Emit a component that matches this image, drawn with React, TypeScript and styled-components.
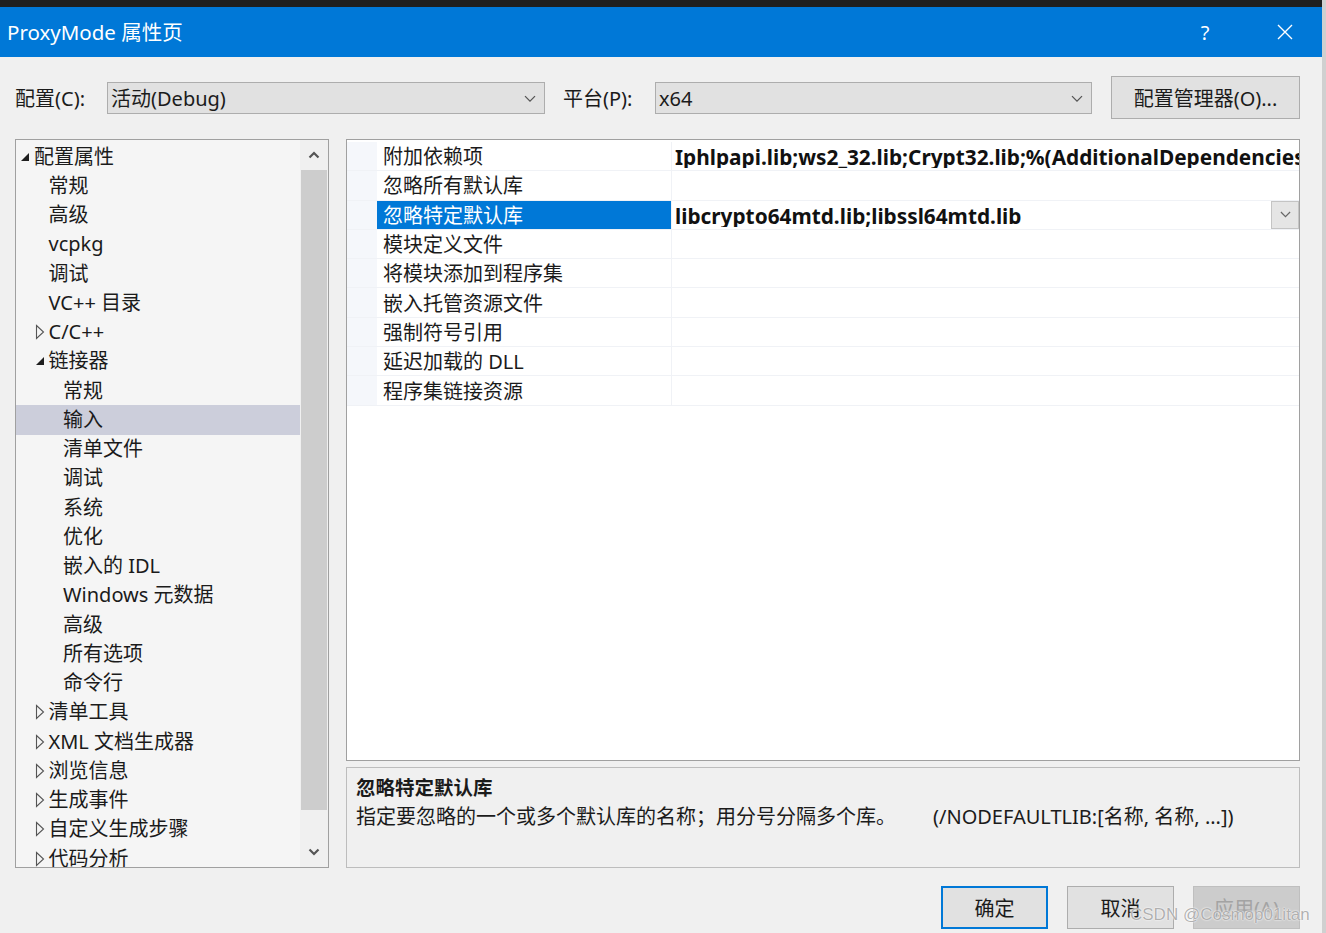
import React from "react";
import styled, { createGlobalStyle } from "styled-components";

const FONT = `"Noto Sans", "Noto Sans CJK SC", sans-serif`;

const Global = createGlobalStyle`
  html, body { margin: 0; padding: 0; background: #f0f0f0; }
  body { font-family: ${FONT}; color: #1b1b1b; }
  * { box-sizing: border-box; }
`;

const Window = styled.div`
  width: 1326px;
  height: 933px;
  display: flex;
  flex-direction: column;
  background: #f0f0f0;
  position: relative;
  overflow: hidden;
  border-right: 4px solid #d0d0d0;
`;

const TopStrip = styled.div`
  height: 7px;
  background: #1f1f1f;
  flex: none;
`;

const TitleBar = styled.div`
  height: 50px;
  flex: none;
  background: #0078d7;
  display: flex;
  align-items: center;
  padding-left: 7px;
  padding-right: 14px;
  color: #fff;
`;

const Title = styled.div`
  font-size: 20.5px;
  flex: 1;
  line-height: 1;
`;

const TitleButton = styled.div<{ $mr?: number }>`
  width: 46px;
  height: 50px;
  margin-right: ${(p) => p.$mr ?? 0}px;
  display: flex;
  align-items: center;
  justify-content: center;
  font-size: 20px;
`;

const Content = styled.div`
  flex: 1;
  min-width: 0;
  display: flex;
  flex-direction: column;
  padding: 19px 22px 0 15px;
`;

const ConfigRow = styled.div`
  height: 43px;
  display: flex;
  align-items: center;
`;

const Label = styled.div<{ $w: number }>`
  width: ${(p) => p.$w}px;
  font-size: 20px;
  line-height: 1;
  flex: none;
  padding-top: 2px;
`;

const Combo = styled.div<{ $w: number; $mr: number }>`
  width: ${(p) => p.$w}px;
  margin-right: ${(p) => p.$mr}px;
  height: 32px;
  flex: none;
  background: #e1e1e1;
  border: 1px solid #adadad;
  display: flex;
  align-items: center;
  padding-left: 3px;
  padding-top: 2px;
  font-size: 20px;
  line-height: 1;
`;

const ComboText = styled.span`
  flex: 1;
`;

const ChevronBox = styled.span`
  width: 28px;
  display: flex;
  align-items: center;
  justify-content: center;
`;

const Button = styled.div<{ $primary?: boolean; $disabled?: boolean; $w?: number }>`
  width: ${(p) => p.$w ?? 107}px;
  height: 43px;
  flex: none;
  display: flex;
  align-items: center;
  justify-content: center;
  font-size: 20px;
  line-height: 1;
  padding-top: 2px;
  background: ${(p) => (p.$disabled ? "#cccccc" : "#e1e1e1")};
  color: ${(p) => (p.$disabled ? "#a3a3a3" : "#1b1b1b")};
  border: ${(p) => (p.$primary ? "2px solid #0078d7" : p.$disabled ? "1px solid #bfbfbf" : "1px solid #adadad")};
`;

const Main = styled.div`
  margin-top: 20px;
  height: 729px;
  display: flex;
  gap: 17px;
  min-width: 0;
`;

const TreePanel = styled.div`
  width: 314px;
  flex: none;
  border: 1px solid #a0a0a0;
  background: #f5f5f5;
  display: flex;
  overflow: hidden;
`;

const TreeList = styled.div`
  flex: 1;
  padding-top: 2px;
  overflow: hidden;
`;

const TreeRow = styled.div<{ $level: number; $selected?: boolean }>`
  height: 29.25px;
  display: flex;
  align-items: center;
  padding-left: ${(p) => 4 + p.$level * 14.5}px;
  background: ${(p) => (p.$selected ? "#cccedb" : "transparent")};
  font-size: 20px;
  line-height: 1;
  white-space: nowrap;
  color: #1b1b1b;
`;

const Toggle = styled.span`
  width: 14px;
  flex: none;
  display: flex;
  align-items: center;
`;

const ScrollBar = styled.div`
  width: 28px;
  flex: none;
  background: #f0f0f0;
  display: flex;
  flex-direction: column;
`;

const ScrollArrow = styled.div<{ $h: number }>`
  height: ${(p) => p.$h}px;
  flex: none;
  display: flex;
  align-items: center;
  justify-content: center;
`;

const ScrollThumb = styled.div`
  height: 640px;
  flex: none;
  background: #cdcdcd;
  margin: 0 1px;
`;

const ScrollTrack = styled.div`
  flex: 1;
`;

const RightCol = styled.div`
  flex: 1;
  min-width: 0;
  display: flex;
  flex-direction: column;
  gap: 6px;
`;

const Grid = styled.div`
  height: 622px;
  flex: none;
  background: #fff;
  border: 1px solid #a0a0a0;
  padding-top: 2px;
  overflow: hidden;
`;

const GridRow = styled.div`
  height: 29.3px;
  display: flex;
  border-bottom: 1px solid #f0f2f6;
`;

const Gutter = styled.div`
  width: 30px;
  flex: none;
  background: #f5f7fb;
`;

const NameCell = styled.div<{ $selected?: boolean }>`
  width: 295px;
  flex: none;
  display: flex;
  align-items: center;
  padding-left: 6px;
  padding-top: 2px;
  font-size: 20px;
  line-height: 1;
  white-space: nowrap;
  background: ${(p) => (p.$selected ? "#0078d7" : "transparent")};
  color: ${(p) => (p.$selected ? "#fff" : "#1b1b1b")};
  border-right: 1px solid #f0f2f6;
`;

const ValueCell = styled.div`
  flex: 1;
  min-width: 0;
  display: flex;
  align-items: center;
  padding-left: 3px;
  font-size: 20.8px;
  font-weight: 700;
  line-height: 1;
  white-space: nowrap;
  overflow: hidden;
  color: #111;
`;

const ValueText = styled.span`
  flex: 1;
  min-width: 0;
  overflow: hidden;
  padding-top: 3px;
`;

const DropButton = styled.div`
  width: 28px;
  height: 28px;
  flex: none;
  background: #e5e5e5;
  border: 1px solid #c4c4c4;
  display: flex;
  align-items: center;
  justify-content: center;
`;

const Desc = styled.div`
  flex: 1;
  background: #f0f0f0;
  border: 1px solid #bdbdbd;
  padding: 8px 9px;
  font-size: 20px;
  line-height: 34px;
  white-space: nowrap;
  overflow: hidden;
`;

const DescTitle = styled.div`
  font-weight: 700;
  line-height: 24px;
  font-size: 19.5px;
`;

const DescSwitch = styled.span`
  margin-left: 37px;
`;

const ButtonRow = styled.div`
  margin-top: 18px;
  display: flex;
  justify-content: flex-end;
  gap: 19px;
`;

const Watermark = styled.div`
  position: absolute;
  left: 1130px;
  top: 905px;
  font-family: "Liberation Sans", sans-serif;
  font-size: 17px;
  color: rgba(150, 150, 150, 0.75);
  text-shadow: 0 0 1px #fff, 0 0 2px #fff;
  white-space: nowrap;
  pointer-events: none;
`;

const Chevron = ({ color = "#555", size = 12 }: { color?: string; size?: number }) => (
  <svg width={size} height={size * 0.6} viewBox="0 0 12 7">
    <path d="M1 1 L6 6 L11 1" fill="none" stroke={color} strokeWidth={1.3} />
  </svg>
);

const BoldChevron = ({ dir }: { dir: "up" | "down" }) => (
  <svg width="12" height="8" viewBox="0 0 12 8">
    <path d={dir === "down" ? "M1.5 1.5 L6 6 L10.5 1.5" : "M1.5 6.5 L6 2 L10.5 6.5"} fill="none" stroke="#555" strokeWidth={2.2} />
  </svg>
);

const Expanded = () => (
  <svg width="10" height="10" viewBox="0 0 10 10">
    <path d="M9 1 L9 9 L1 9 Z" fill="#1e1e1e" />
  </svg>
);

const Collapsed = () => (
  <svg width="10" height="16" viewBox="0 0 10 16">
    <path d="M1.5 1.5 L8.5 8 L1.5 14.5 Z" fill="none" stroke="#555" strokeWidth={1.1} />
  </svg>
);

type Node = { label: string; level: number; state?: "open" | "closed"; selected?: boolean };

const tree: Node[] = [
  { label: "配置属性", level: 0, state: "open" },
  { label: "常规", level: 1 },
  { label: "高级", level: 1 },
  { label: "vcpkg", level: 1 },
  { label: "调试", level: 1 },
  { label: "VC++ 目录", level: 1 },
  { label: "C/C++", level: 1, state: "closed" },
  { label: "链接器", level: 1, state: "open" },
  { label: "常规", level: 2 },
  { label: "输入", level: 2, selected: true },
  { label: "清单文件", level: 2 },
  { label: "调试", level: 2 },
  { label: "系统", level: 2 },
  { label: "优化", level: 2 },
  { label: "嵌入的 IDL", level: 2 },
  { label: "Windows 元数据", level: 2 },
  { label: "高级", level: 2 },
  { label: "所有选项", level: 2 },
  { label: "命令行", level: 2 },
  { label: "清单工具", level: 1, state: "closed" },
  { label: "XML 文档生成器", level: 1, state: "closed" },
  { label: "浏览信息", level: 1, state: "closed" },
  { label: "生成事件", level: 1, state: "closed" },
  { label: "自定义生成步骤", level: 1, state: "closed" },
  { label: "代码分析", level: 1, state: "closed" },
];

type Prop = { name: string; value?: string; selected?: boolean };

const props: Prop[] = [
  { name: "附加依赖项", value: "Iphlpapi.lib;ws2_32.lib;Crypt32.lib;%(AdditionalDependencies)" },
  { name: "忽略所有默认库" },
  { name: "忽略特定默认库", value: "libcrypto64mtd.lib;libssl64mtd.lib", selected: true },
  { name: "模块定义文件" },
  { name: "将模块添加到程序集" },
  { name: "嵌入托管资源文件" },
  { name: "强制符号引用" },
  { name: "延迟加载的 DLL" },
  { name: "程序集链接资源" },
];

export default function App() {
  return (
    <>
      <Global />
      <Window>
        <TopStrip />
        <TitleBar>
          <Title>ProxyMode 属性页</Title>
          <TitleButton $mr={34}>?</TitleButton>
          <TitleButton>
            <svg width="16" height="16" viewBox="0 0 16 16">
              <path d="M1 1 L15 15 M15 1 L1 15" stroke="#fff" strokeWidth={1.4} />
            </svg>
          </TitleButton>
        </TitleBar>
        <Content>
          <ConfigRow>
            <Label $w={92}>配置(C):</Label>
            <Combo $w={438} $mr={18}>
              <ComboText>活动(Debug)</ComboText>
              <ChevronBox>
                <Chevron />
              </ChevronBox>
            </Combo>
            <Label $w={92}>平台(P):</Label>
            <Combo $w={437} $mr={19}>
              <ComboText>x64</ComboText>
              <ChevronBox>
                <Chevron />
              </ChevronBox>
            </Combo>
            <Button $w={189}>配置管理器(O)...</Button>
          </ConfigRow>
          <Main>
            <TreePanel>
              <TreeList>
                {tree.map((n, i) => (
                  <TreeRow key={i} $level={n.level} $selected={n.selected}>
                    <Toggle>
                      {n.state === "open" ? <Expanded /> : n.state === "closed" ? <Collapsed /> : null}
                    </Toggle>
                    {n.label}
                  </TreeRow>
                ))}
              </TreeList>
              <ScrollBar>
                <ScrollArrow $h={30}>
                  <BoldChevron dir="up" />
                </ScrollArrow>
                <ScrollThumb />
                <ScrollTrack />
                <ScrollArrow $h={30}>
                  <BoldChevron dir="down" />
                </ScrollArrow>
              </ScrollBar>
            </TreePanel>
            <RightCol>
              <Grid>
                {props.map((p, i) => (
                  <GridRow key={i}>
                    <Gutter />
                    <NameCell $selected={p.selected}>{p.name}</NameCell>
                    <ValueCell>
                      <ValueText>{p.value ?? ""}</ValueText>
                      {p.selected && (
                        <DropButton>
                          <Chevron color="#666" size={11} />
                        </DropButton>
                      )}
                    </ValueCell>
                  </GridRow>
                ))}
              </Grid>
              <Desc>
                <DescTitle>忽略特定默认库</DescTitle>
                <div>
                  指定要忽略的一个或多个默认库的名称；用分号分隔多个库。
                  <DescSwitch>(/NODEFAULTLIB:[名称, 名称, ...])</DescSwitch>
                </div>
              </Desc>
            </RightCol>
          </Main>
          <ButtonRow>
            <Button $primary>确定</Button>
            <Button>取消</Button>
            <Button $disabled>应用(A)</Button>
          </ButtonRow>
        </Content>
        <Watermark>CSDN @Cosmop01itan</Watermark>
      </Window>
    </>
  );
}
